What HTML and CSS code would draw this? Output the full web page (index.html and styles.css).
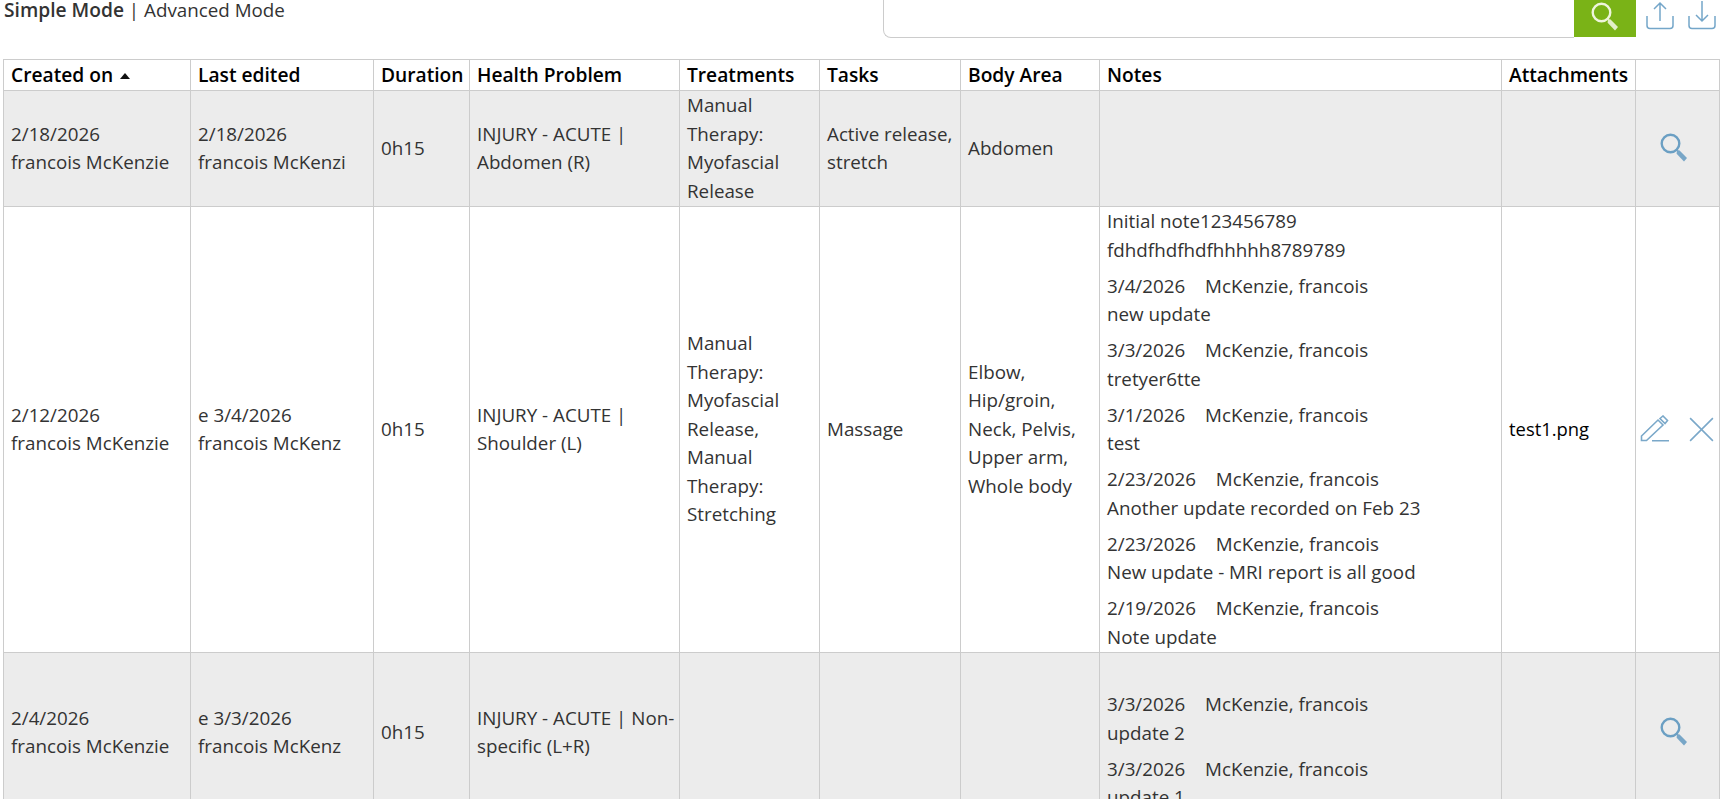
FILE: index.html
```html
<!DOCTYPE html>
<html lang="en">
<head>
<meta charset="utf-8">
<title>Visits</title>
<link rel="stylesheet" href="styles.css">
</head>
<body>
<svg class="defs" width="0" height="0" aria-hidden="true">
  <symbol id="lens" viewBox="0 0 30 32">
    <circle cx="11.5" cy="11.5" r="8.8" fill="none" stroke="currentColor" stroke-width="2.4"/>
    <path d="M18 18l2.6 0.6L28 26l-3 3.4-7.4-7.6z" fill="currentColor" opacity=".9"/>
  </symbol>
</svg>
<div class="page">
  <div class="toolbar">
    <div class="modes"><b>Simple Mode</b> | Advanced Mode</div>
    <div class="search">
      <div class="search-input"></div>
      <button class="search-btn" type="button"><svg class="search-icon"><use href="#lens"/></svg></button>
    </div>
    <svg class="tool-icon" viewBox="0 0 28 30"><path d="M14 3v18M8 9l6-6 6 6M1 16v9.5a3 3 0 0 0 3 3h20a3 3 0 0 0 3-3V16" fill="none" stroke="currentColor" stroke-width="1.5"/></svg>
    <svg class="tool-icon" viewBox="0 0 28 30"><path d="M14 1v20M8 15l6 6 6-6M1 16v9.5a3 3 0 0 0 3 3h20a3 3 0 0 0 3-3V16" fill="none" stroke="currentColor" stroke-width="1.5"/></svg>
  </div>
  <table class="grid">
    <colgroup>
      <col class="c1"><col class="c2"><col class="c3"><col class="c4"><col class="c5"><col class="c6"><col class="c7"><col class="c8"><col class="c9"><col class="c10">
    </colgroup>
    <thead>
      <tr><th>Created on <span class="sort"></span></th><th>Last edited</th><th>Duration</th><th>Health Problem</th><th>Treatments</th><th>Tasks</th><th>Body Area</th><th>Notes</th><th>Attachments</th><th></th></tr>
    </thead>
    <tbody>
      <tr class="alt">
        <td>2/18/2026<br>francois McKenzie</td>
        <td>2/18/2026<br>francois McKenzi</td>
        <td>0h15</td>
        <td class="open">INJURY - ACUTE | Abdomen (R)</td>
        <td>Manual Therapy: Myofascial Release</td>
        <td class="open">Active release, stretch</td>
        <td>Abdomen</td>
        <td></td>
        <td></td>
        <td class="actions"><svg class="view-icon"><use href="#lens"/></svg></td>
      </tr>
      <tr>
        <td>2/12/2026<br>francois McKenzie</td>
        <td>e 3/4/2026<br>francois McKenz</td>
        <td>0h15</td>
        <td class="open">INJURY - ACUTE | Shoulder (L)</td>
        <td>Manual Therapy: Myofascial Release, Manual Therapy: Stretching</td>
        <td class="open">Massage</td>
        <td>Elbow, Hip/groin, Neck, Pelvis, Upper arm, Whole body</td>
        <td class="notes">
          <p>Initial note123456789<br>fdhdfhdfhdfhhhhh8789789</p>
          <p>3/4/2026 <span class="by">McKenzie, francois</span><br>new update</p>
          <p>3/3/2026 <span class="by">McKenzie, francois</span><br>tretyer6tte</p>
          <p>3/1/2026 <span class="by">McKenzie, francois</span><br>test</p>
          <p>2/23/2026 <span class="by">McKenzie, francois</span><br>Another update recorded on Feb 23</p>
          <p>2/23/2026 <span class="by">McKenzie, francois</span><br>New update - MRI report is all good</p>
          <p>2/19/2026 <span class="by">McKenzie, francois</span><br>Note update</p>
        </td>
        <td class="file">test1.png</td>
        <td class="actions edit">
          <svg class="edit-icon" viewBox="0 0 30 28"><path d="M1.5 25.5V21L18 5l5 5L6.5 25.5zM20 3.5L23 1l4.5 4.5-2.5 3zM12 25.7h17" fill="none" stroke="currentColor" stroke-width="1.6"/></svg>
          <svg class="del-icon" viewBox="0 0 28 28"><path d="M3 3l22 22M25 3L3 25" fill="none" stroke="currentColor" stroke-width="1.5"/></svg>
        </td>
      </tr>
      <tr class="alt">
        <td>2/4/2026<br>francois McKenzie</td>
        <td>e 3/3/2026<br>francois McKenz</td>
        <td>0h15</td>
        <td class="open">INJURY - ACUTE | Non-specific (L+R)</td>
        <td></td>
        <td></td>
        <td></td>
        <td class="notes">
          <p class="blank">&nbsp;</p>
          <p>3/3/2026 <span class="by">McKenzie, francois</span><br>update 2</p>
          <p>3/3/2026 <span class="by">McKenzie, francois</span><br>update 1</p>
        </td>
        <td></td>
        <td class="actions"><svg class="view-icon"><use href="#lens"/></svg></td>
      </tr>
    </tbody>
  </table>
</div>
</body>
</html>
```
FILE: styles.css
```css
html, body { margin: 0; height: 799px; overflow: hidden; background: #fff; }
body { font-family: "Open Sans", "Noto Sans", sans-serif; font-size: 18.8px; font-weight: 400; line-height: 28.5px; color: #333; }
.defs { position: absolute; }
.page { margin-top: -20px; }
.toolbar { display: flex; align-items: flex-start; height: 79px; padding-left: 4px; }
.modes { margin-top: 20px; line-height: 20px; }
.modes b { font-size: 19.2px; font-weight: 600; }
.search { display: flex; width: 753px; height: 58px; margin-left: auto; margin-right: 10px; }
.search-input { flex: 1; border: 1px solid #ccc; border-top: 0; border-right: 0; border-radius: 0 0 0 8px; box-sizing: border-box; }
.search-btn { width: 62px; height: 57px; padding: 20px 0 0; border: 0; background: #7ab317; color: #eef5dc; }
.search-icon { width: 30px; height: 32px; }
.tool-icon { width: 28px; height: 30px; margin-top: 20px; margin-right: 14px; color: #74a6c9; flex: none; }
.tool-icon:last-child { margin-right: 7px; }
.grid { table-layout: fixed; border-collapse: collapse; width: 1716px; margin-left: 3px; }
.c1 { width: 187px; } .c2 { width: 183px; } .c3 { width: 96px; } .c4 { width: 210px; } .c5 { width: 140px; }
.c6 { width: 141px; } .c7 { width: 139px; } .c8 { width: 402px; } .c9 { width: 134px; } .c10 { width: 84px; }
.grid th, .grid td { border: 1px solid #ccc; padding: 0.5px 8px 0.5px 7px; text-align: left; vertical-align: middle; overflow: hidden; }
.grid th { color: #000; font-size: 19.2px; font-weight: 600; height: 26px; padding-right: 0; white-space: nowrap; }
.grid .open { padding-right: 0; }
.alt td { background: #ececec; }
.sort { display: inline-block; width: 0; height: 0; margin: 0 0 3px 2px; border: 5px solid transparent; border-top: 0; border-bottom: 6px solid #111; }
.notes p { margin: 0 0 7.5px; }
.notes .blank { margin-bottom: 8.5px; }
.notes p:last-child { margin-bottom: 0; }
.by { margin-left: 15px; }
.grid .file { color: #000; font-size: 18.4px; }
.grid .actions { padding: 0; text-align: center; white-space: nowrap; font-size: 0; }
.grid .edit { text-align: left; padding-left: 4px; }
.view-icon { width: 30px; height: 32px; margin-right: 7px; color: #6b9fc3; vertical-align: middle; }
.edit-icon { width: 30px; height: 28px; margin-right: 17px; color: #7aa8c9; vertical-align: middle; }
.del-icon { width: 29px; height: 29px; color: #7aa8c9; vertical-align: middle; }
```
